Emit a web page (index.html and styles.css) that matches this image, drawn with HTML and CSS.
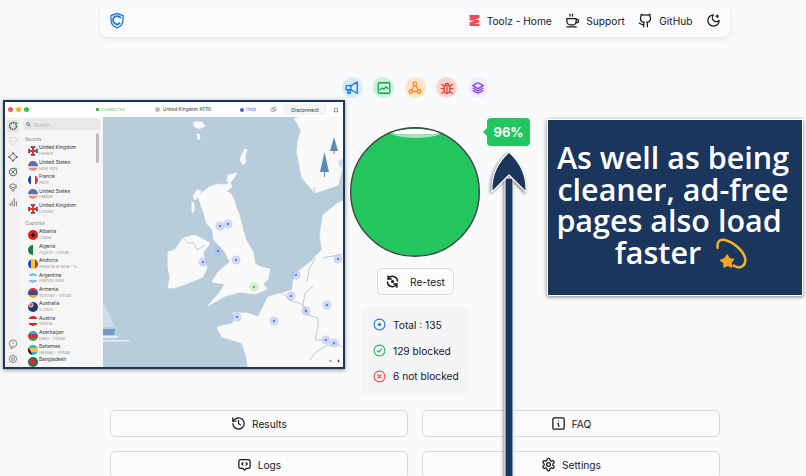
FILE: index.html
```html
<!DOCTYPE html>
<html lang="en">
<head>
<meta charset="utf-8">
<title>Toolz - Ad Block Test</title>
<link rel="stylesheet" href="styles.css">
</head>
<body>
<div class="page">
  <nav class="nav">
    <svg class="logo" viewBox="0 0 24 24" fill="none" stroke="#1d7ad9" stroke-width="2"><path d="M12 1.500 3 4.500v7c0 5.500 4 9.500 9 11.500 5-2 9-6 9-11.500v-7z"/><path d="M18 8.500c-1.500-2-3.500-3-6-3-3.500 0-6 2.500-6 5.500 0 3.500 3 6 6 7.500 2-1 3.500-2 4.500-3.500" stroke-width="2.600"/></svg>
    <div class="nav-links">
      <a class="nav-link"><svg class="ic z" viewBox="0 0 24 24" fill="#f0475a"><path d="M3 2h18v6L11 11h10v4l-10 3h10v4H3v-7l10-3H3z"/></svg>Toolz - Home</a>
      <a class="nav-link"><svg class="ic" viewBox="0 0 24 24" fill="none" stroke="#18181b" stroke-width="2" stroke-linecap="round" stroke-linejoin="round"><path d="M8 2c-.5 1 .5 1.500 0 3M12 2c-.5 1 .5 1.500 0 3"/><path d="M3 9h15v4a6 6 0 0 1-6 6H9a6 6 0 0 1-6-6z"/><path d="M18 10h1a2.500 2.500 0 0 1 0 5.500h-1.500"/><path d="M3 22h15"/></svg>Support</a>
      <a class="nav-link"><svg class="ic" viewBox="0 0 24 24" fill="none" stroke="#18181b" stroke-width="2" stroke-linecap="round" stroke-linejoin="round"><path d="M15 22v-4a4.800 4.800 0 0 0-1-3.500c3 0 6-2 6-5.500.08-1.250-.27-2.480-1-3.500.28-1.150.28-2.350 0-3.500 0 0-1 0-3 1.500-2.640-.5-5.360-.5-8 0C6 2 5 2 5 2c-.3 1.150-.3 2.350 0 3.500A5.403 5.403 0 0 0 4 9c0 3.500 3 5.500 6 5.500-.39.49-.68 1.050-.85 1.650-.17.6-.22 1.230-.15 1.850v4"/><path d="M9 18c-4.510 2-5-2-7-2"/></svg>GitHub</a>
      <a class="nav-link"><svg class="ic" viewBox="0 0 24 24" fill="none" stroke="#18181b" stroke-width="2" stroke-linecap="round" stroke-linejoin="round"><path d="M12 3a6 6 0 0 0 9 9 9 9 0 1 1-9-9Z"/><path d="M18 3v4M16 5h4" stroke-width="1.800"/></svg></a>
    </div>
  </nav>

  <div class="tabs">
    <span class="tab tab-blue"><svg viewBox="0 0 24 24" fill="none" stroke="#1d7ad9" stroke-width="2.400" stroke-linejoin="round"><path d="M2 8h8l11-6v19l-11-6H2z"/><path d="M5 15v6h4v-6M10 8v7"/></svg></span>
    <span class="tab tab-green"><svg viewBox="0 0 24 24" fill="none" stroke="#16a34a" stroke-width="2.200" stroke-linejoin="round" stroke-linecap="round"><rect x="2" y="3" width="20" height="18" rx="2"/><path d="M5 15l4-3 3 2 3-4 4 3"/></svg></span>
    <span class="tab tab-orange"><svg viewBox="0 0 24 24" fill="none" stroke="#f08a24" stroke-width="2.200"><circle cx="12" cy="5" r="3"/><circle cx="5" cy="18" r="3"/><circle cx="19" cy="18" r="3"/><path d="M10.500 8 6.500 15.500M13.500 8l4 7.500M8 18h8"/></svg></span>
    <span class="tab tab-red"><svg viewBox="0 0 24 24" fill="none" stroke="#ef3b2d" stroke-width="2.200" stroke-linecap="round"><rect x="7" y="7" width="10" height="14" rx="5"/><path d="M9 7a3 3 0 0 1 6 0M12 10v11M2 13h5M17 13h5M3 6l4 3M21 6l-4 3M3 21l4-3M21 21l-4-3"/></svg></span>
    <span class="tab tab-purple"><svg viewBox="0 0 24 24" fill="none" stroke="#7c3aed" stroke-width="2.200" stroke-linejoin="round"><path d="M12 3 3 8l9 5 9-5z"/><path d="m3 12 9 5 9-5M3 16l9 5 9-5"/></svg></span>
  </div>

  <div class="gauge">
    <svg viewBox="0 0 130 130" class="gauge-svg"><circle cx="65" cy="65" r="64.300" fill="#22c55e"/><path d="M40 6C52 .5 78 .5 92 6 80 8 52 8 40 6z" fill="#fff"/><path d="M40 6C52 8 80 8 92 6 82 12.500 50 12.500 40 6z" fill="#a6e6bd"/><circle cx="65" cy="65" r="64.300" fill="none" stroke="#444" stroke-width="1.400"/></svg>
    <div class="badge">96%</div>
  </div>

  <button class="retest"><svg class="ic" viewBox="0 0 24 24" fill="none" stroke="#18181b" stroke-width="2.400" stroke-linecap="round" stroke-linejoin="round"><path d="M20 11A8 8 0 0 0 5 8M4 13a8 8 0 0 0 15 3"/><path d="M5 3v5h5M19 21v-5h-5"/><circle cx="12" cy="12" r="1.300"/></svg>Re-test</button>

  <div class="stats">
    <div class="stat"><svg class="st" viewBox="0 0 24 24" fill="none" stroke="#1d72d8" stroke-width="2"><circle cx="12" cy="12" r="10"/><circle cx="12" cy="12" r="1.800" fill="#1d72d8"/></svg>Total : 135</div>
    <div class="stat"><svg class="st" viewBox="0 0 24 24" fill="none" stroke="#22b45a" stroke-width="2" stroke-linecap="round" stroke-linejoin="round"><circle cx="12" cy="12" r="10"/><path d="m8 12.500 3 2.500 5-6"/></svg>129 blocked</div>
    <div class="stat"><svg class="st" viewBox="0 0 24 24" fill="none" stroke="#ef4444" stroke-width="2" stroke-linecap="round"><circle cx="12" cy="12" r="10"/><path d="m9 9 6 6M15 9l-6 6"/></svg>6 not blocked</div>
  </div>

  <div class="actions">
    <button class="action"><svg class="ic" viewBox="0 0 24 24" fill="none" stroke="#18181b" stroke-width="2" stroke-linecap="round" stroke-linejoin="round"><path d="M3 12a9 9 0 1 0 9-9 9.750 9.750 0 0 0-6.740 2.740L3 8"/><path d="M3 3v5h5"/><path d="M12 7v5l3 2"/></svg>Results</button>
    <button class="action"><svg class="ic" viewBox="0 0 24 24" fill="none" stroke="#18181b" stroke-width="2" stroke-linecap="round" stroke-linejoin="round"><rect x="3" y="3" width="18" height="18" rx="2"/><path d="M12 8h.01M11 12h1v4h1"/></svg>FAQ</button>
    <button class="action"><svg class="ic" viewBox="0 0 24 24" fill="none" stroke="#18181b" stroke-width="2" stroke-linecap="round" stroke-linejoin="round"><path d="M6 4h12a3 3 0 0 1 3 3v8a3 3 0 0 1-3 3h-3l-3 3-3-3H6a3 3 0 0 1-3-3V7a3 3 0 0 1 3-3z"/><path d="m9.500 9-2 2 2 2M14.500 9l2 2-2 2"/></svg>Logs</button>
    <button class="action"><svg class="ic" viewBox="0 0 24 24" fill="none" stroke="#18181b" stroke-width="2" stroke-linecap="round" stroke-linejoin="round"><path d="M12.220 2h-.44a2 2 0 0 0-2 2v.18a2 2 0 0 1-1 1.730l-.43.25a2 2 0 0 1-2 0l-.15-.08a2 2 0 0 0-2.730.73l-.22.38a2 2 0 0 0 .73 2.730l.15.1a2 2 0 0 1 1 1.720v.51a2 2 0 0 1-1 1.740l-.15.09a2 2 0 0 0-.73 2.730l.22.38a2 2 0 0 0 2.730.73l.15-.08a2 2 0 0 1 2 0l.43.25a2 2 0 0 1 1 1.730V20a2 2 0 0 0 2 2h.44a2 2 0 0 0 2-2v-.18a2 2 0 0 1 1-1.730l.43-.25a2 2 0 0 1 2 0l.15.08a2 2 0 0 0 2.730-.73l.22-.39a2 2 0 0 0-.73-2.730l-.15-.08a2 2 0 0 1-1-1.740v-.5a2 2 0 0 1 1-1.740l.15-.09a2 2 0 0 0 .73-2.730l-.22-.38a2 2 0 0 0-2.730-.73l-.15.08a2 2 0 0 1-2 0l-.43-.25a2 2 0 0 1-1-1.730V4a2 2 0 0 0-2-2z"/><circle cx="12" cy="12" r="3"/></svg>Settings</button>
  </div>
</div>

<svg class="arrow" viewBox="0 0 60 330" fill="none">
  <path d="M21 28h8v302h-8z" fill="#1a365d" stroke="#fff" stroke-width="1"/>
  <path d="M25 2C15 11 7 24 8 42L25 25l17 17C43 24 35 11 25 2z" fill="#1a365d" stroke="#fff" stroke-width="1.200" stroke-linejoin="round"/>
</svg>

<div class="callout">
  <p class="callout-text">As well as being cleaner, ad-free pages also load&nbsp; &nbsp;&nbsp;faster <svg class="swirl" viewBox="0 0 36 36" fill="none"><path d="M3 11C2 5 5 1 10 2 20 4 32 14 34 23 35 31 29 36 21 31" stroke="#f6b02c" stroke-width="2.800" stroke-linecap="round"/><path d="m14 19 2 4 5 1-3 4 1 5-5-2-4 2 0-5-4-3 5-2z" fill="#f6a623" stroke="#f6a623" stroke-width="1.200" stroke-linejoin="round"/></svg></p>
</div>

<div class="window">
  <header class="win-bar">
    <span class="lights"><i class="light l-r"></i><i class="light l-y"></i><i class="light l-g"></i></span>
    <span class="connected"><i class="lock"></i>CONNECTED</span>
    <span class="server"><i class="globe"></i>United Kingdom #2110</span>
    <span class="help"><i class="help-dot"></i>Help</span>
    <svg class="bar-ic" viewBox="0 0 24 24" fill="none" stroke="#777" stroke-width="2"><rect x="3" y="7" width="12" height="12" rx="3"/><rect x="10" y="4" width="11" height="12" rx="3"/></svg>
    <span class="disconnect">Disconnect</span>
    <svg class="bar-ic bell" viewBox="0 0 24 24" fill="none" stroke="#333" stroke-width="2.200"><path d="M6 17V10a6 6 0 0 1 12 0v7l2 2H4z"/></svg>
  </header>
  <div class="win-body">
    <aside class="rail">
      <span class="rail-ic rail-on"><svg viewBox="0 0 24 24" fill="none" stroke="#333" stroke-width="3"><circle cx="12" cy="12" r="8" stroke-dasharray="4 2"/><circle cx="19" cy="5" r="3.500" fill="#48c15b" stroke="none"/></svg></span>
      <span class="rail-ic"><svg viewBox="0 0 24 24" fill="none" stroke="#ccc" stroke-width="1.800"><path d="M12 3 4 6v6c0 4 3 7 8 9 5-2 8-5 8-9V6z"/><path d="M9 12h6"/></svg></span>
      <span class="rail-ic"><svg viewBox="0 0 24 24" fill="none" stroke="#444" stroke-width="2"><path d="m12 3 9 9-9 9-9-9z"/><circle cx="12" cy="3" r="1.500"/><circle cx="3" cy="12" r="1.500"/><circle cx="21" cy="12" r="1.500"/><circle cx="12" cy="21" r="1.500"/></svg></span>
      <span class="rail-ic"><svg viewBox="0 0 24 24" fill="none" stroke="#444" stroke-width="2"><circle cx="12" cy="12" r="9"/><path d="m8 8 8 8M16 8l-8 8"/><circle cx="18" cy="5" r="3.500" fill="#48c15b" stroke="none"/></svg></span>
      <span class="rail-ic"><svg viewBox="0 0 24 24" fill="none" stroke="#555" stroke-width="1.800"><path d="m12 4 9 5-9 5-9-5z"/><path d="m3 13 9 5 9-5M8 20l4 2 4-2"/></svg></span>
      <span class="rail-ic"><svg viewBox="0 0 24 24" fill="none" stroke="#555" stroke-width="1.800"><path d="M5 22v-8M10 22V9M15 22V3M20 22v-12"/></svg></span>
      <span class="rail-fill"></span>
      <span class="rail-ic"><svg viewBox="0 0 24 24" fill="none" stroke="#666" stroke-width="1.800"><circle cx="12" cy="11" r="9"/><path d="M12 6v6M12 15v1M8 20l-1 3 5-2"/></svg></span>
      <span class="rail-ic"><svg viewBox="0 0 24 24" fill="none" stroke="#666" stroke-width="1.800"><path d="m12 2 3 3h4v4l3 3-3 3v4h-4l-3 3-3-3H5v-4l-3-3 3-3V5h4z"/><circle cx="12" cy="12" r="3.500"/></svg></span>
    </aside>
    <section class="list">
      <div class="search"><svg class="search-ic" viewBox="0 0 24 24" fill="none" stroke="#444" stroke-width="3"><circle cx="10" cy="10" r="7"/><path d="m15 15 7 7"/></svg>Search</div>
      <div class="scrollbar"></div>
      <div class="section">Recents</div>
      <div class="row"><i class="flag f-uk"></i><div class="names"><b>United Kingdom</b><span>Fastest</span></div></div>
      <div class="row"><i class="flag f-us"></i><div class="names"><b>United States</b><span>New York</span></div></div>
      <div class="row"><i class="flag f-fr"></i><div class="names"><b>France</b><span>Paris</span></div></div>
      <div class="row"><i class="flag f-us"></i><div class="names"><b>United States</b><span>Fastest</span></div></div>
      <div class="row"><i class="flag f-uk"></i><div class="names"><b>United Kingdom</b><span>London</span></div></div>
      <div class="section section-2">Countries</div>
      <div class="row"><i class="flag f-al"></i><div class="names"><b>Albania</b><span>Tirana</span></div></div>
      <div class="row"><i class="flag f-dz"></i><div class="names"><b>Algeria</b><span>Algiers - Virtual</span></div></div>
      <div class="row"><i class="flag f-ad"></i><div class="names"><b>Andorra</b><span>Andorra la Vella - V...</span></div></div>
      <div class="row"><i class="flag f-ar"></i><div class="names"><b>Argentina</b><span>Buenos Aires</span></div></div>
      <div class="row"><i class="flag f-am"></i><div class="names"><b>Armenia</b><span>Yerevan - Virtual</span></div></div>
      <div class="row"><i class="flag f-au"></i><div class="names"><b>Australia</b><span>5 cities</span></div></div>
      <div class="row"><i class="flag f-at"></i><div class="names"><b>Austria</b><span>Vienna</span></div></div>
      <div class="row"><i class="flag f-az"></i><div class="names"><b>Azerbaijan</b><span>Baku - Virtual</span></div></div>
      <div class="row"><i class="flag f-bs"></i><div class="names"><b>Bahamas</b><span>Nassau - Virtual</span></div></div>
      <div class="row row-last"><i class="flag f-bd"></i><div class="names"><b>Bangladesh</b></div></div>
    </section>
    <div class="map">
      <svg class="map-svg" viewBox="103 117 240 250" preserveAspectRatio="none">
        <rect x="103" y="117" width="240" height="250" fill="#b8cddc"/>
        <g class="land">
          <path d="M209 187 218 184 224 185 230 183 232 187 226 191 231 194 234 200 236 207 239 214 241 222 243 230 246 240 253 252 255 264 261 267 270 269 268 279 263 284 267 289 255 294 240 292 225 296 208 306 220 292 225 284 212 282 218 272 230 262 225 252 214 240 212 229 207 224 204 214 201 205 198 196 203 192Z"/>
          <path d="M168 252 175 250 183 238 195 235 210 243 203 253 207 267 203 277 188 283 175 288H168L170 278 168 268Z"/>
          <path d="M217 327 235 323 233 313 247 313 258 317 268 297 292 290 295 273 312 260 322 250 320 235 323 215 338 203 343 201V367H248L246 355 242 343 222 337Z"/>
          <path d="M297 123 294 119 300 117H343V165L338 185 315 193 302 178 297 152 298 140 301 130Z"/>
          <path d="M194 122 202 122 205 126 199 129 194 126Z"/><path d="M197 134 199 134 200 139 198 139Z"/><path d="M245 149 247 150 245 156 246 162 243 165 240 160 242 154Z"/>
          <path d="M228 175 233 174 237 173 234 178 230 183 227 181Z"/><path d="M197 190 201 191 199 196 195 200 193 196Z"/><path d="M192 202 194 203 194 211 192 213Z"/><path d="M233 323 234 320 237 320 237 323Z"/>
        </g>
        <g fill="none" stroke="#b8cddc" stroke-width="1">
          <path d="M275 290l10 5 4 5 10 3 6 4 3 8 10 3 0 8-3 14 12 0"/><path d="M296 273l6-5 10-8M307 282l2-12 6-12"/><path d="M305 313l-2-8 2-12 8-7"/><path d="M310 360l6-8 10-6 10-2 7 3"/><path d="M323 258l20-4M316 205l-2-18"/>
          <path d="M183 238l5 5 6 0 3 7 8-5"/>
        </g>
        <path d="M103 302l12 25h-12z" fill="#cddce8"/>
        <path d="M320 172l4.500-20 4.500 20z" fill="#5c8bb6"/><path d="M324 172h1v5h-1z" fill="#5c8bb6"/>
        <path d="M330 151l4-14 4 14z" fill="#5c8bb6"/><path d="M333.500 151h1v3h-1z" fill="#5c8bb6"/>
        <path d="M103 329h12l-1 6h-11z" fill="#6f9bc4"/><path d="M103 336h16l-3 2h-13zM103 340h27v1.500h-27z" fill="#e8eff4"/>
        <g class="markers">
          <circle cx="220" cy="226" r="4.500"/><circle cx="228" cy="224" r="4.500"/><circle cx="343" cy="163" r="4.500"/><circle cx="218" cy="251" r="4.500"/><circle cx="203" cy="262" r="4.500"/><circle cx="236" cy="260" r="4.500"/><circle cx="296" cy="275" r="4.500"/><circle cx="291" cy="296" r="4.500"/><circle cx="306" cy="311" r="4.500"/><circle cx="327" cy="305" r="4.500"/><circle cx="338" cy="259" r="4.500"/><circle cx="237" cy="317" r="4.500"/><circle cx="274" cy="321" r="4.500"/><circle cx="326" cy="340" r="4.500"/><circle cx="334" cy="343" r="4.500"/>
        </g>
        <g fill="#3d5ee8">
          <circle cx="220" cy="226" r="1"/><circle cx="228" cy="224" r="1"/><circle cx="218" cy="251" r="1"/><circle cx="203" cy="262" r="1"/><circle cx="236" cy="260" r="1"/><circle cx="296" cy="275" r="1"/><circle cx="291" cy="296" r="1"/><circle cx="306" cy="311" r="1"/><circle cx="327" cy="305" r="1"/><circle cx="338" cy="259" r="1"/><circle cx="237" cy="317" r="1"/><circle cx="274" cy="321" r="1"/><circle cx="326" cy="340" r="1"/><circle cx="334" cy="343" r="1"/>
        </g>
        <circle cx="254" cy="287" r="4.500" fill="#cdeec6"/><circle cx="254" cy="287" r="1" fill="#3cb54a"/>
        <path d="M329 361h3M337 361h3M338.500 359.500v3" stroke="#444" stroke-width=".7"/>
      </svg>
    </div>
  </div>
</div>
</body>
</html>
```
FILE: styles.css
```css
* { box-sizing: border-box; }
html, body { margin: 0; height: 476px; overflow: hidden; }
body { position: relative; background: #f9fafc; font-family: Inter, "Liberation Sans", sans-serif; color: #18181b; }
.page { width: 630px; margin-left: 100px; padding-top: 4px; display: flex; flex-direction: column; align-items: center; }

.nav { width: 100%; height: 33px; background: #fbfbfd; border-radius: 8px; box-shadow: 0 2px 5px rgba(0,0,0,.09); display: flex; align-items: center; justify-content: space-between; padding: 0 9px; flex: none; }
.logo { width: 16px; height: 17px; }
.nav-links { display: flex; align-items: center; gap: 13.500px; }
.nav-link { display: flex; align-items: center; gap: 6px; font-size: 10.200px; font-weight: 400; }
.ic { width: 15px; height: 15px; flex: none; }
.z { width: 13px; height: 13px; }

.tabs { display: flex; gap: 10.500px; margin-top: 40px; flex: none; }
.tab { width: 21px; height: 21px; border-radius: 50%; display: flex; align-items: center; justify-content: center; }
.tab svg { width: 14px; height: 14px; }
.tab-blue { background: #d8ebfb; }
.tab-green { background: #c8f3d6; }
.tab-orange { background: #fde3c8; }
.tab-red { background: #fed4d0; }
.tab-purple { background: #f3ecfd; }

.gauge { position: relative; width: 130px; height: 130px; margin-top: 29px; flex: none; }
.gauge-svg { display: block; width: 130px; height: 130px; }
.badge { position: absolute; left: 137px; top: -9px; width: 43px; height: 28px; background: #22c55e; color: #fff; border-radius: 4px; font-size: 13px; font-weight: 700; display: flex; align-items: center; justify-content: center; }
.badge::before { content: ""; position: absolute; left: -4px; top: 10px; border: 4px solid transparent; border-left: 0; border-right-color: #22c55e; }

.retest { margin-top: 11px; width: 77px; height: 27px; background: #fbfbfd; border: 1px solid #d8d9dc; border-radius: 5px; display: flex; align-items: center; justify-content: center; gap: 10px; font: 400 10.200px Inter, "Liberation Sans", sans-serif; color: #18181b; padding: 0; flex: none; }

.stats { margin-top: 11px; width: 106px; height: 89px; background: #f5f5f7; border-radius: 6px; padding: 6px 0 6px 11px; display: flex; flex-direction: column; justify-content: space-between; flex: none; font-size: 10.200px; }
.stat { display: flex; align-items: center; gap: 7px; height: 26px; white-space: nowrap; }
.st { width: 13px; height: 13px; flex: none; }

.actions { width: 610px; margin-top: 15px; display: grid; grid-template-columns: 298px 298px; gap: 14px; flex: none; }
.action { height: 27px; background: #fbfbfd; border: 1px solid #d8d9dc; border-radius: 5px; display: flex; align-items: center; justify-content: center; gap: 6px; font: 400 10.200px Inter, "Liberation Sans", sans-serif; color: #18181b; padding: 0; }

.arrow { position: absolute; left: 484px; top: 150px; width: 60px; height: 330px; overflow: visible; filter: drop-shadow(-1px 1px 1.500px rgba(0,0,0,.5)); }

.callout { position: absolute; left: 547px; top: 119px; width: 256px; height: 177px; background: #1a365d; border: 1px solid #fff; box-shadow: 0 1px 4px rgba(0,0,0,.5); padding: 22px 9px 0 5px; }
.callout-text { margin: 0; color: #fff; font-family: "Open Sans", sans-serif; font-weight: 600; font-size: 30.500px; line-height: 31.700px; text-align: center; }
.swirl { width: 32px; height: 32px; vertical-align: -6px; margin-left: 6px; }

.window { position: absolute; left: 3px; top: 100px; width: 342px; height: 269px; border: 2px solid #1a365d; box-shadow: 0 1px 4px rgba(0,0,0,.45); background: #fff; display: flex; flex-direction: column; overflow: hidden; font-family: Inter, "Liberation Sans", sans-serif; }
.win-bar { height: 15px; background: #fff; display: flex; align-items: center; flex: none; font-size: 5px; position: relative; }
.lights { display: flex; gap: 3px; margin-left: 3px; width: 88px; }
.light { width: 5px; height: 5px; border-radius: 50%; }
.l-r { background: #ee5f58; }
.l-y { background: #f5b52e; }
.l-g { background: #38c24b; }
.connected { display: flex; align-items: center; gap: 2px; width: 59px; color: #58c05e; font-size: 3.800px; }
.lock { width: 3px; height: 3px; background: #3fb04a; }
.server { display: flex; align-items: center; gap: 3px; width: 85px; color: #333; font-size: 4.600px; white-space: nowrap; }
.globe { width: 5px; height: 5px; border-radius: 50%; background: #bbb; }
.help { display: flex; align-items: center; gap: 2px; width: 30px; color: #4967d8; font-size: 4.600px; }
.help-dot { width: 4px; height: 4px; border-radius: 50%; background: #3859e0; }
.bar-ic { width: 7px; height: 7px; flex: none; margin-right: 6px; }
.disconnect { width: 44px; height: 11px; margin-right: 6px; background: #f4f4f4; border-radius: 3px; display: flex; align-items: center; justify-content: center; color: #333; font-size: 5.200px; }
.bell { margin: 0; width: 6px; height: 6px; }

.win-body { flex: 1; display: flex; min-height: 0; }
.rail { width: 15px; background: #f2f2f2; display: flex; flex-direction: column; align-items: center; gap: 3.300px; padding: 3px 0 2px; flex: none; }
.rail-ic { width: 12px; height: 12px; display: flex; align-items: center; justify-content: center; border-radius: 2px; flex: none; }
.rail-ic svg { width: 10px; height: 10px; }
.rail-on { background: #e2e2e2; }
.rail-fill { flex: 1; }

.list { width: 83px; background: #f6f6f6; padding: 2px 0 0 3px; position: relative; overflow: hidden; flex: none; }
.search { width: 77px; height: 11px; background: #e8e8e8; border-radius: 2px; display: flex; align-items: center; gap: 3px; padding-left: 3px; color: #b5b5b5; font-size: 4.800px; }
.search-ic { width: 5px; height: 5px; }
.scrollbar { position: absolute; left: 76px; top: 16px; width: 3px; height: 30px; background: #bcbcbc; border-radius: 2px; }
.section { font-size: 4.300px; color: #777; margin-top: 7px; height: 7px; line-height: 6px; padding-left: 2px; }
.section-2 { margin-top: 5px; }
.row { display: flex; align-items: center; height: 14.400px; padding-left: 5px; gap: 1px; }
.row-last { align-items: flex-start; }
.flag { width: 10px; height: 10px; border-radius: 50%; flex: none; display: block; }
.names { display: flex; flex-direction: column; line-height: 5.800px; white-space: nowrap; }
.names b { font-weight: 400; font-size: 4.900px; color: #333; }
.names span { font-size: 4.100px; color: #999; }

.f-uk { background: linear-gradient(90deg, transparent 42%, #d33 42%, #d33 58%, transparent 58%), linear-gradient(0deg, transparent 42%, #d33 42%, #d33 58%, transparent 58%), linear-gradient(45deg, transparent 42%, #f5f5f5 42%, #f5f5f5 58%, transparent 58%), linear-gradient(-45deg, #2b3f7e 42%, #f5f5f5 42%, #f5f5f5 58%, #2b3f7e 58%); }
.f-us { background: linear-gradient(180deg, #5c6fa6 50%, #e8c9c9 50%, #f0d8d8 70%, #e08e8e 70%); }
.f-fr { background: linear-gradient(90deg, #2340a0 33%, #fff 33%, #fff 66%, #e0303a 66%); }
.f-al { background: radial-gradient(circle, #222 28%, #dd2222 30%); }
.f-dz { background: linear-gradient(90deg, #1d7a41 50%, #f2f2f2 50%); }
.f-ad { background: linear-gradient(90deg, #2447a8 33%, #f6cc2c 33%, #f6cc2c 66%, #d6283a 66%); }
.f-ar { background: linear-gradient(180deg, #8ac0e8 33%, #f5f5f5 33%, #f5f5f5 66%, #8ac0e8 66%); }
.f-am { background: linear-gradient(180deg, #d62832 33%, #2f4ba0 33%, #2f4ba0 66%, #f2a024 66%); }
.f-au { background: radial-gradient(circle at 30% 30%, #d55 14%, #f0f0f0 18%, #1f3578 30%); }
.f-at { background: linear-gradient(180deg, #d8262e 33%, #f7f7f7 33%, #f7f7f7 66%, #d8262e 66%); }
.f-az { background: linear-gradient(180deg, #35a8d8 33%, #d8303a 33%, #d8303a 66%, #3a9a4a 66%); }
.f-bs { background: linear-gradient(60deg, #1a1a1a 30%, transparent 30%), linear-gradient(180deg, #34b0c8 33%, #f2c72c 33%, #f2c72c 66%, #34b0c8 66%); }
.f-bd { background: radial-gradient(circle at 45% 50%, #d8283a 36%, #0f7a48 38%); }

.map { flex: 1; min-width: 0; }
.map-svg { display: block; width: 100%; height: 100%; }
.land { fill: #f9f9f9; stroke: #f9f9f9; stroke-width: .8; stroke-linejoin: round; }
.markers { fill: #a8bdf2; fill-opacity: .55; }
```
